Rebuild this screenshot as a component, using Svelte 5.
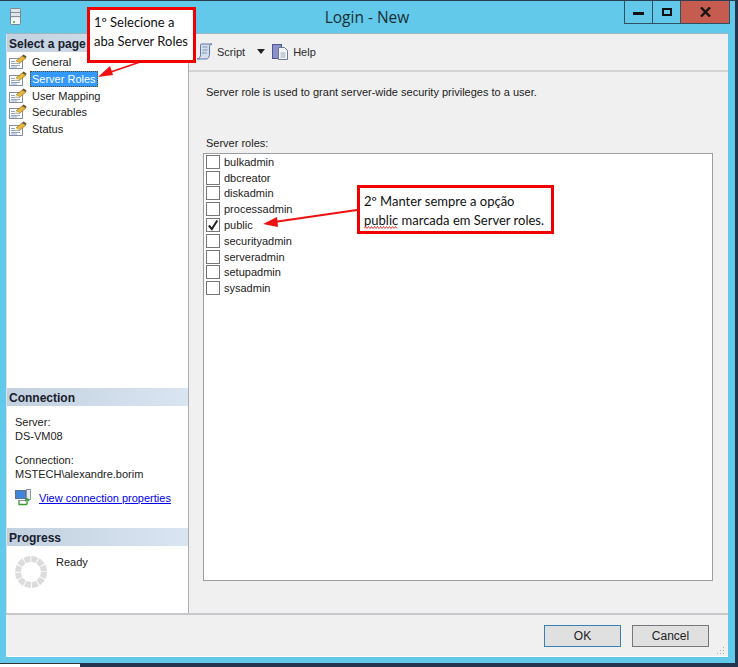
<script>
  const pages = ["General", "Server Roles", "User Mapping", "Securables", "Status"];
  const roles = [
    { name: "bulkadmin" },
    { name: "dbcreator" },
    { name: "diskadmin" },
    { name: "processadmin" },
    { name: "public", checked: true },
    { name: "securityadmin" },
    { name: "serveradmin" },
    { name: "setupadmin" },
    { name: "sysadmin" }
  ];
</script>

{#snippet pageIcon()}
  <svg class="page-icon" width="19" height="16" viewBox="0 0 19 16">
    <rect x="0.5" y="4.5" width="13" height="10" fill="#fff" stroke="#7f8ea6" />
    <path d="M2 7.5h4M2 9.5h9M2 11.5h9M2 13h6" stroke="#8fa3c4" fill="none" />
    <path d="M7 7l6-5 4 2-6 5z" fill="#e7b73c" stroke="#8a6a1c" stroke-width="0.6" />
    <path d="M13 2l1.5-1.5 3 2L17 4z" fill="#5d5030" />
    <path d="M7 7l-1 2.5 5-.5z" fill="#f6e6b0" />
  </svg>
{/snippet}

<div class="screen">
  <div class="window">
    <header class="titlebar">
      <svg class="app-icon" width="12" height="18" viewBox="0 0 12 18">
        <rect x="0.5" y="0.5" width="10" height="16" rx="1" fill="#dfe5ea" stroke="#7b8793" />
        <path d="M1 4.5h9M1 8.5h9" stroke="#87929c" />
        <rect x="1" y="10" width="9" height="6" fill="#f2f5f7" />
        <rect x="3" y="13" width="2" height="2" fill="#6cc060" />
      </svg>
      <h1>Login - New</h1>
      <div class="controls">
        <div class="ctl min"><span></span></div>
        <div class="ctl max"><span></span></div>
        <div class="ctl close">
          <svg width="11" height="10" viewBox="0 0 11 10">
            <path d="M1 0.5l9 9M10 0.5l-9 9" stroke="#151515" stroke-width="2.4" fill="none" />
          </svg>
        </div>
      </div>
    </header>

    <div class="client">
      <div class="upper">
        <aside class="sidebar">
          <div class="section-head">Select a page</div>
          <nav class="pages">
            {#each pages as page, i}
              <div class="page">
                {@render pageIcon()}
                <span class="page-label" class:selected={i === 1}>{page}</span>
              </div>
            {/each}
          </nav>

          <div class="section-head">Connection</div>
          <div class="connection">
            <p>Server:<br />DS-VM08</p>
            <p>Connection:<br />MSTECH\alexandre.borim</p>
            <div class="conn-link">
              <svg width="18" height="17" viewBox="0 0 18 17">
                <rect x="0.5" y="1.5" width="10" height="8" fill="#3f86d8" stroke="#5a7396" />
                <rect x="11.5" y="0.5" width="4" height="10" fill="#e6e9ee" stroke="#8a94a3" />
                <path d="M3 11.5h8" stroke="#8a94a3" />
                <path d="M4 12v3.5h8M12 15.5V10m-2.200 2L12 9.500l2.200 2.500" stroke="#3b9a32" stroke-width="1.300" fill="none" />
              </svg>
              <span class="link">View connection properties</span>
            </div>
          </div>

          <div class="section-head">Progress</div>
          <div class="progress">
            <svg width="34" height="34" viewBox="0 0 34 34">
              <circle cx="17" cy="17" r="13" fill="none" stroke="#dcdcdc" stroke-width="6" stroke-dasharray="5.800 1"/>
            </svg>
            <span>Ready</span>
          </div>
        </aside>

        <main class="main">
          <div class="toolbar">
            <svg width="18" height="17" viewBox="0 0 18 17">
              <path d="M5 1h11c-2 0-2.500 2-2.500 3v7c0 2-1 5-3 5H1c2 0 3.500-2 3.500-4V4c0-1.500 0-3 .5-3z" fill="#d5deec" stroke="#5f76a3" />
              <path d="M6.500 4h5M6.500 7h5M6 10h5" stroke="#7d90b5" fill="none" />
            </svg>
            <span class="tool-label">Script</span>
            <span class="caret"></span>
            <svg class="help-icon" width="18" height="18" viewBox="0 0 18 18">
              <rect x="0.500" y="1.500" width="9" height="14" fill="#8c92c9" stroke="#4e558f" />
              <path d="M6.500 4.500h6l3 3v9h-9z" fill="#f4f6fa" stroke="#6b7a94" />
              <path d="M8.500 10h5M8.500 12h5M8.500 14h5" stroke="#9aa7ba" />
            </svg>
            <span class="tool-label">Help</span>
          </div>

          <div class="content">
            <p class="desc">Server role is used to grant server-wide security privileges to a user.</p>
            <label class="roles-label" for="roles">Server roles:</label>
            <div class="listbox" id="roles">
              {#each roles as role}
                <div class="role">
                  <span class="check">
                    {#if role.checked}
                      <svg width="12" height="12" viewBox="0 0 12 12">
                        <path d="M1.800 6.500l3 3.500 5.500-8.500" stroke="#222" stroke-width="2" fill="none" />
                      </svg>
                    {/if}
                  </span>
                  <span>{role.name}</span>
                </div>
              {/each}
            </div>
          </div>
        </main>
      </div>

      <footer class="footer">
        <button class="btn default">OK</button>
        <button class="btn">Cancel</button>
        <svg class="grip" width="9" height="9" viewBox="0 0 9 9">
          <path d="M7 1h1v1H7zM4 4h1v1H4zM7 4h1v1H7zM1 7h1v1H1zM4 7h1v1H4zM7 7h1v1H7z" fill="#a9a9a9" />
        </svg>
      </footer>
    </div>
  </div>

  <div class="taskbar">
    <span class="task-start"></span>
    <span class="task-rest"></span>
  </div>

  <!-- annotations pasted on top of the screenshot -->
  <svg class="arrows" width="738" height="667" viewBox="0 0 738 667">
    <path d="M140 62L108 73" stroke="#f01010" stroke-width="1.800" fill="none" />
    <path d="M98 77l12-11 3 9z" fill="#f01010" />
    <path d="M357 210L274 222" stroke="#f01010" stroke-width="1.800" fill="none" />
    <path d="M263 224l14-7 1 10z" fill="#f01010" />
  </svg>
  <div class="note note-1">1º Selecione a<br />aba Server Roles</div>
  <div class="note note-2">2º Manter sempre a opção<br /><span class="squiggle">public<svg width="34" height="3" viewBox="0 0 34 3"><path d="M0 2.500l1.500-2 1.500 2 1.500-2 1.500 2 1.500-2 1.500 2 1.500-2 1.500 2 1.500-2 1.500 2 1.500-2 1.500 2 1.500-2 1.500 2 1.500-2 1.500 2 1.500-2 1.500 2 1.500-2 1.500 2 1.500-2 1.500 2" stroke="#e81010" stroke-width="0.800" fill="none" /></svg></span> marcada em Server roles.</div>
</div>

<style>
  :global(body) {
    margin: 0;
  }

  .screen {
    position: relative;
    width: 738px;
    height: 667px;
    overflow: hidden;
    background: #62c9eb;
    font-family: "Liberation Sans", Arial, sans-serif;
    font-size: 11px;
    color: #222;
    display: flex;
    flex-direction: column;
  }

  .window {
    height: 663px;
    border-top: 1px solid #2a3f50;
    border-right: 3px solid #24344e;
    box-sizing: border-box;
    padding: 0 7px 6px 6px;
    display: flex;
    flex-direction: column;
  }

  .titlebar {
    height: 32px;
    flex: none;
    position: relative;
    display: flex;
    justify-content: center;
  }

  .titlebar h1 {
    margin: 7px 0 0 0;
    font-family: "Open Sans", sans-serif;
    font-weight: 400;
    font-size: 15.500px;
    line-height: 18px;
    color: #1b2f33;
  }

  .app-icon {
    position: absolute;
    left: 4px;
    top: 7px;
  }

  .controls {
    position: absolute;
    top: 0;
    right: -2px;
    display: flex;
    height: 23px;
    border: 1px solid #2f505f;
    border-top: 0;
    box-sizing: border-box;
  }

  .ctl {
    width: 27px;
    display: flex;
    align-items: center;
    justify-content: center;
    border-right: 1px solid #2f505f;
  }

  .min span {
    width: 11px;
    height: 3px;
    margin-top: 3px;
    background: #111;
  }

  .max span {
    width: 6px;
    height: 4px;
    border: 2px solid #111;
  }

  .close {
    width: 48px;
    background: #c65b50;
    border-right: 0;
  }

  .client {
    flex: 1;
    min-height: 0;
    display: flex;
    flex-direction: column;
    background: #f0f0f0;
    border-top: 1px solid #9fb6c2;
    border-bottom: 1px solid #fff;
  }

  .upper {
    flex: 1;
    min-height: 0;
    display: flex;
    border-bottom: 2px solid #c8c8cc;
  }

  .sidebar {
    width: 181px;
    flex: none;
    background: #fff;
    border-right: 1px solid #acacac;
    border-left: 1px solid #d8e4ea;
    display: flex;
    flex-direction: column;
  }

  .section-head {
    height: 18px;
    flex: none;
    padding-left: 2px;
    font-size: 12px;
    font-weight: 700;
    line-height: 20px;
    color: #16202c;
    background: linear-gradient(to right, #c3d0df, #d9e5f1);
  }

  .pages {
    flex: 1;
    padding-top: 2px;
  }

  .page {
    height: 16.700px;
    display: flex;
    align-items: center;
    padding-left: 2px;
  }

  .page-icon {
    flex: none;
    margin-right: 2px;
  }

  .page-label {
    padding: 0 1px;
    line-height: 14px;
    border: 1px dotted transparent;
  }

  .page-label.selected {
    background: #3399ff;
    color: #fff;
    border-color: #5b4a20;
  }

  .connection {
    height: 122px;
    flex: none;
    padding: 9px 0 0 8px;
    box-sizing: border-box;
  }

  .connection p {
    margin: 0 0 10px;
    line-height: 14px;
  }

  .connection p + p {
    margin-bottom: 8px;
  }

  .conn-link {
    display: flex;
    align-items: center;
    gap: 6px;
  }

  .link {
    color: #0000ee;
    text-decoration: underline;
  }

  .progress {
    height: 67px;
    flex: none;
    display: flex;
    align-items: flex-start;
    padding: 9px 0 0 7px;
    box-sizing: border-box;
    gap: 8px;
  }

  .progress span {
    margin-top: 1px;
  }

  .main {
    flex: 1;
    min-width: 0;
    display: flex;
    flex-direction: column;
  }

  .toolbar {
    height: 38px;
    flex: none;
    box-sizing: border-box;
    border-bottom: 2px solid #d4d4d4;
    display: flex;
    align-items: center;
    padding: 0 0 1px 7px;
    gap: 3px;
  }

  .tool-label {
    color: #2a2a2a;
  }

  .caret {
    width: 0;
    height: 0;
    margin-left: 9px;
    margin-right: 4px;
    border-left: 4px solid transparent;
    border-right: 4px solid transparent;
    border-top: 5px solid #222;
  }

  .content {
    flex: 1;
    min-height: 0;
    display: flex;
    flex-direction: column;
    padding: 13px 15px 32px 14px;
  }

  .desc {
    margin: 0 0 37px 3px;
    line-height: 14px;
  }

  .roles-label {
    margin: 0 0 3px 3px;
    line-height: 14px;
  }

  .listbox {
    flex: 1;
    background: #fff;
    border: 1px solid #9a9fa3;
  }

  .role {
    height: 15.800px;
    display: flex;
    align-items: center;
    padding-left: 2px;
    gap: 4px;
  }

  .check {
    width: 12px;
    height: 12px;
    flex: none;
    border: 1px solid #777;
    background: #fff;
    display: block;
  }

  .check svg {
    display: block;
  }

  .footer {
    height: 41px;
    flex: none;
    position: relative;
    display: flex;
    justify-content: flex-end;
    align-items: center;
    padding-right: 19px;
    gap: 11px;
  }

  .btn {
    width: 77px;
    height: 22px;
    padding: 0;
    background: #e0e0e0;
    border: 1px solid #777;
    font-family: inherit;
    font-size: 12px;
    color: #222;
  }

  .btn.default {
    border-color: #3a80b4;
  }

  .grip {
    position: absolute;
    right: 3px;
    bottom: 1px;
  }

  .taskbar {
    height: 4px;
    flex: none;
    display: flex;
  }

  .task-start {
    width: 80px;
    background: #fff;
    border-top: 1px solid #333;
  }

  .task-rest {
    flex: 1;
    background: #24344e;
  }

  .arrows {
    position: absolute;
    left: 0;
    top: 0;
    pointer-events: none;
  }

  .note {
    position: absolute;
    box-sizing: border-box;
    background: #fff;
    border: 3px solid #f00000;
    font-family: Lato, "Open Sans", sans-serif;
    font-size: 13px;
    line-height: 19px;
    color: #111;
  }

  .note-1 {
    left: 87px;
    top: 7px;
    width: 109px;
    height: 56px;
    padding: 3px 0 0 4px;
  }

  .note-2 {
    left: 357px;
    top: 185px;
    width: 197px;
    height: 49px;
    padding: 4px 0 0 4px;
  }

  .squiggle {
    position: relative;
  }

  .squiggle svg {
    position: absolute;
    left: 0;
    bottom: -1px;
  }
</style>
